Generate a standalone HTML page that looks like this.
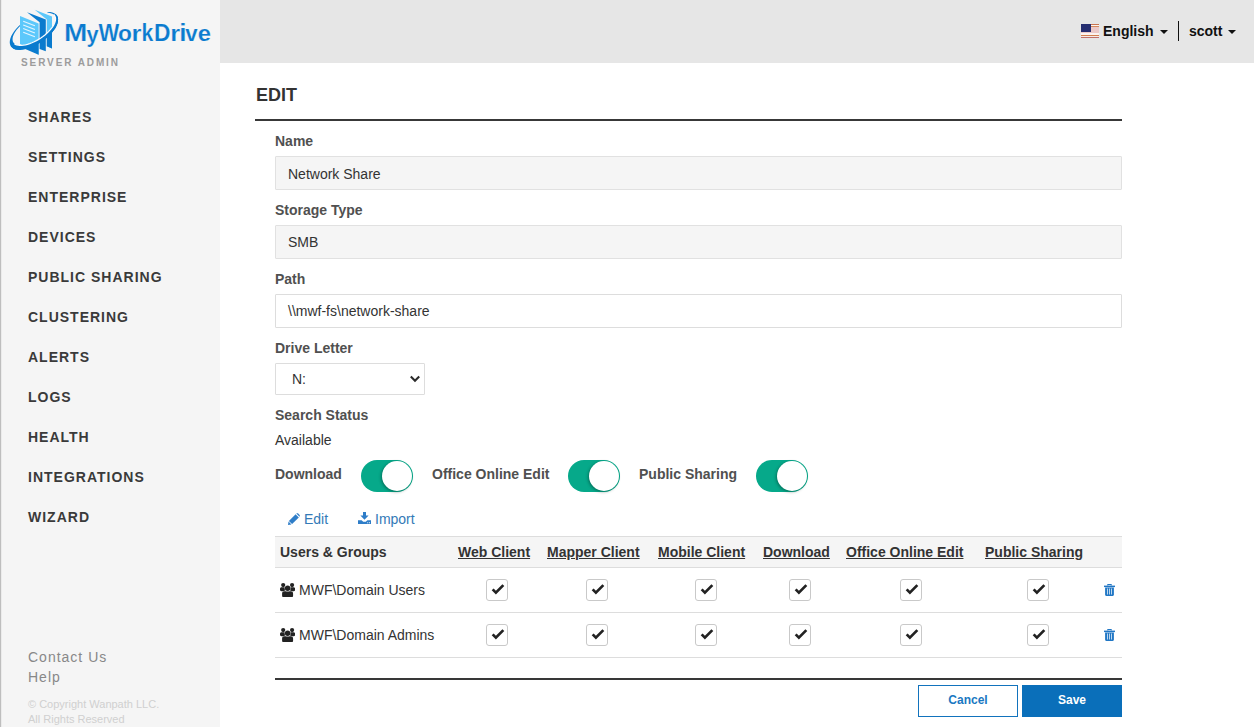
<!DOCTYPE html>
<html>
<head>
<meta charset="utf-8">
<title>MyWorkDrive Server Admin</title>
<style>
*{box-sizing:border-box;margin:0;padding:0}
html,body{width:1254px;height:727px;overflow:hidden;background:#fff}
body{font-family:"Liberation Sans",sans-serif;color:#333;position:relative}
.abs{position:absolute;white-space:nowrap}
#side{position:absolute;left:0;top:0;width:220px;height:727px;background:#f5f5f5}
#edge{position:absolute;left:0;top:0;width:2px;height:727px;background:linear-gradient(90deg,#bebebe 0,#bebebe 50%,#ebebeb 50%,#ebebeb 100%)}
#top{position:absolute;left:220px;top:0;width:1034px;height:63px;background:#e6e6e6}
.nav{position:absolute;left:28px;font-weight:bold;font-size:14px;letter-spacing:1px;color:#3a3a3a;line-height:16px;white-space:nowrap}
.lbl{position:absolute;font-weight:bold;font-size:14px;color:#505050;line-height:16px;white-space:nowrap}
.inp{position:absolute;left:275px;width:847px;height:34px;border:1px solid #ddd;border-radius:1px;font-size:14px;line-height:32px;padding:1px 0 0 12px;color:#333;white-space:nowrap}
.ro{background:#f5f5f5;border-color:#e1e1e1}
.th{position:absolute;top:544px;font-weight:bold;font-size:14px;color:#333;line-height:16px;white-space:nowrap}
.u{text-decoration:underline}
.cb{position:absolute;width:22px;height:22px;border:1px solid #c9c9c9;border-radius:3px;background:#fff}
.tg{position:absolute;width:52px;height:32px;border-radius:16px;background:#06a98a}
.tg i{position:absolute;right:1px;top:1px;width:30px;height:30px;border-radius:50%;background:#fff;box-shadow:-1px 1px 3px rgba(0,50,40,.45)}
</style>
</head>
<body>
<div id="side"></div>
<div id="edge"></div>
<div id="top"></div>


<!-- logo -->
<svg class="abs" style="left:0;top:0" width="220" height="75" viewBox="0 0 220 75">
 <defs><clipPath id="front"><path d="M53.65 14.55 L54.47 15.41 L55.07 16.41 L55.44 17.56 L55.57 18.82 L55.46 20.21 L55.13 21.69 L54.56 23.25 L53.76 24.87 L52.75 26.54 L51.54 28.24 L50.13 29.95 L48.55 31.65 L46.81 33.32 L44.93 34.95 L42.93 36.51 L40.83 37.99 L38.66 39.37 L36.43 40.64 L34.19 41.78 L31.94 42.79 L29.71 43.64 L27.53 44.34 L25.42 44.87 L23.41 45.22 L21.51 45.40 L19.75 45.40 L18.15 45.22 L16.72 44.87 L15.48 44.34 L14.45 43.65 L4.45 48.65 L0.00 75.00 L70.00 75.00 L63.65 11.55 Z"/></clipPath><clipPath id="back"><path d="M0 0 H20 V75 H0 Z M47.5 0 H70 V75 H47.5 Z"/></clipPath></defs>
 <g clip-path="url(#back)"><path fill="#0a7bce" fill-rule="evenodd" d="M56.94 15.52 L57.71 17.10 L58.08 18.92 L58.03 20.94 L57.57 23.14 L56.70 25.46 L55.45 27.88 L53.82 30.35 L51.86 32.84 L49.59 35.28 L47.05 37.66 L44.29 39.91 L41.34 42.02 L38.28 43.93 L35.13 45.62 L31.97 47.06 L28.84 48.22 L25.80 49.09 L22.89 49.64 L20.18 49.88 L17.70 49.79 L15.49 49.38 L13.61 48.65 L12.07 47.62 L10.90 46.30 L10.13 44.72 L9.76 42.90 L9.81 40.88 L10.27 38.68 L11.14 36.36 L12.39 33.94 L14.02 31.47 L15.98 28.98 L18.25 26.54 L20.79 24.16 L23.55 21.91 L26.50 19.80 L29.56 17.89 L32.71 16.20 L35.87 14.76 L39.00 13.60 L42.04 12.73 L44.95 12.18 L47.66 11.94 L50.14 12.03 L52.35 12.44 L54.23 13.17 L55.77 14.20 L56.94 15.52 Z M54.70 15.73 L55.31 17.06 L55.56 18.60 L55.45 20.33 L54.96 22.20 L54.12 24.19 L52.94 26.26 L51.43 28.38 L49.62 30.52 L47.55 32.63 L45.25 34.68 L42.75 36.63 L40.11 38.46 L37.36 40.12 L34.56 41.60 L31.75 42.86 L28.98 43.89 L26.29 44.67 L23.74 45.17 L21.36 45.41 L19.20 45.36 L17.29 45.04 L15.67 44.44 L14.37 43.58 L13.40 42.47 L12.79 41.14 L12.54 39.60 L12.65 37.87 L13.14 36.00 L13.98 34.01 L15.16 31.94 L16.67 29.82 L18.48 27.68 L20.55 25.57 L22.85 23.52 L25.35 21.57 L27.99 19.74 L30.74 18.08 L33.54 16.60 L36.35 15.34 L39.12 14.31 L41.81 13.53 L44.36 13.03 L46.74 12.79 L48.90 12.84 L50.81 13.16 L52.43 13.76 L53.73 14.62 L54.70 15.73 Z"/></g>
 <path fill="#5cc8fb" d="M34.7 9.7 L52 16.6 L52 48.5 L46.8 46.3 L46.8 19.4 Z"/>
 <path fill="#0a7bce" d="M27 12.2 L45.8 19.6 L45.8 51.2 L39.6 48.9 L39.6 22.3 Z"/>
 <path fill="#5cc8fb" d="M20 16 L38.6 23.5 L38.6 54.7 L20 44 Z"/>
 <g stroke="#e4f5ff" stroke-width="1.1" fill="none"><path d="M23.2 21.3 L34.9 25.8"/><path d="M23.2 24.9 L34.9 29.4"/><path d="M23.2 28.6 L34.9 33.1"/><path d="M23.2 32.3 L34.9 36.8"/></g>
 <g clip-path="url(#front)">
  <path fill="#0a7bce" d="M20 16 L38.6 23.5 L38.6 54.7 L25.8 49.2 L20 44 Z"/>
  <path fill="#0a7bce" d="M34.7 9.7 L52 16.6 L52 48.5 L46.8 46.3 L46.8 19.4 Z"/>
  <path fill="#0a7bce" fill-rule="evenodd" d="M56.94 15.52 L57.71 17.10 L58.08 18.92 L58.03 20.94 L57.57 23.14 L56.70 25.46 L55.45 27.88 L53.82 30.35 L51.86 32.84 L49.59 35.28 L47.05 37.66 L44.29 39.91 L41.34 42.02 L38.28 43.93 L35.13 45.62 L31.97 47.06 L28.84 48.22 L25.80 49.09 L22.89 49.64 L20.18 49.88 L17.70 49.79 L15.49 49.38 L13.61 48.65 L12.07 47.62 L10.90 46.30 L10.13 44.72 L9.76 42.90 L9.81 40.88 L10.27 38.68 L11.14 36.36 L12.39 33.94 L14.02 31.47 L15.98 28.98 L18.25 26.54 L20.79 24.16 L23.55 21.91 L26.50 19.80 L29.56 17.89 L32.71 16.20 L35.87 14.76 L39.00 13.60 L42.04 12.73 L44.95 12.18 L47.66 11.94 L50.14 12.03 L52.35 12.44 L54.23 13.17 L55.77 14.20 L56.94 15.52 Z M54.70 15.73 L55.31 17.06 L55.56 18.60 L55.45 20.33 L54.96 22.20 L54.12 24.19 L52.94 26.26 L51.43 28.38 L49.62 30.52 L47.55 32.63 L45.25 34.68 L42.75 36.63 L40.11 38.46 L37.36 40.12 L34.56 41.60 L31.75 42.86 L28.98 43.89 L26.29 44.67 L23.74 45.17 L21.36 45.41 L19.20 45.36 L17.29 45.04 L15.67 44.44 L14.37 43.58 L13.40 42.47 L12.79 41.14 L12.54 39.60 L12.65 37.87 L13.14 36.00 L13.98 34.01 L15.16 31.94 L16.67 29.82 L18.48 27.68 L20.55 25.57 L22.85 23.52 L25.35 21.57 L27.99 19.74 L30.74 18.08 L33.54 16.60 L36.35 15.34 L39.12 14.31 L41.81 13.53 L44.36 13.03 L46.74 12.79 L48.90 12.84 L50.81 13.16 L52.43 13.76 L53.73 14.62 L54.70 15.73 Z"/>
 </g>
 <path d="M53.65 14.55 L54.47 15.41 L55.07 16.41 L55.44 17.56 L55.57 18.82 L55.46 20.21 L55.13 21.69 L54.56 23.25 L53.76 24.87 L52.75 26.54 L51.54 28.24 L50.13 29.95 L48.55 31.65 L46.81 33.32 L44.93 34.95 L42.93 36.51 L40.83 37.99 L38.66 39.37 L36.43 40.64 L34.19 41.78 L31.94 42.79 L29.71 43.64 L27.53 44.34 L25.42 44.87 L23.41 45.22 L21.51 45.40 L19.75 45.40 L18.15 45.22 L16.72 44.87 L15.48 44.34 L14.45 43.65" fill="none" stroke="#fafcfe" stroke-width="1.25"/>
 <g font-family="Liberation Sans, sans-serif" font-weight="bold" font-size="23" fill="#0b7bcf" stroke="#f5f5f5" stroke-width="0.2"><text transform="translate(64.12 40.90) scale(1.219 1.055)">M</text><text transform="translate(86.43 41.62) scale(0.945 0.981)">y</text><text transform="translate(98.38 40.90) scale(0.956 1.055)">W</text><text transform="translate(117.91 40.98) scale(0.988 0.960)">o</text><text transform="translate(131.41 40.90) scale(1.115 0.920)">r</text><text transform="translate(141.42 40.90) scale(0.919 1.014)">k</text><text transform="translate(153.97 40.90) scale(0.993 1.055)">D</text><text transform="translate(170.23 40.90) scale(1.101 0.920)">r</text><text transform="translate(179.37 40.90) scale(1.141 1.014)">i</text><text transform="translate(185.31 40.90) scale(0.968 0.922)">v</text><text transform="translate(197.87 40.98) scale(1.035 0.960)">e</text></g>
</svg>
<div class="abs" style="left:21px;top:56.5px;font-size:10px;font-weight:bold;letter-spacing:1.9px;color:#9c9c9c;line-height:12px">SERVER ADMIN</div>

<!-- header right -->
<svg class="abs" style="left:1081px;top:24px" width="18" height="15" viewBox="0 0 18 15" shape-rendering="crispEdges">
 <rect x="0" y="0" width="18" height="14" fill="#ebc9c9"/>
 <rect x="0" y="0" width="18" height="1" fill="#c9744f"/>
 <rect x="0" y="1" width="18" height="1" fill="#fbf3f0"/>
 <rect x="0" y="2" width="18" height="1" fill="#d58a5e"/>
 <rect x="0" y="9" width="18" height="2" fill="#fbf3f0"/>
 <rect x="0" y="11" width="18" height="1" fill="#d2804f"/>
 <rect x="0" y="12" width="18" height="1" fill="#f6eae6"/>
 <rect x="0" y="13" width="18" height="1" fill="#c0706a"/>
 <rect x="0" y="0" width="10" height="8" fill="#252d70"/>
</svg>
<div class="abs" style="left:1103px;top:23px;font-size:14px;font-weight:bold;color:#111;line-height:16px">English</div>
<svg class="abs" style="left:1160px;top:30px" width="8" height="4" viewBox="0 0 8 4"><path d="M0 0 H8 L4 4 Z" fill="#111"/></svg>
<div class="abs" style="left:1178px;top:21px;width:1px;height:20px;background:#111"></div>
<div class="abs" style="left:1189px;top:23px;font-size:14px;font-weight:bold;color:#111;line-height:16px">scott</div>
<svg class="abs" style="left:1228px;top:30px" width="8" height="4" viewBox="0 0 8 4"><path d="M0 0 H8 L4 4 Z" fill="#111"/></svg>

<!-- nav -->
<div class="nav" style="top:109px">SHARES</div>
<div class="nav" style="top:149px">SETTINGS</div>
<div class="nav" style="top:189px">ENTERPRISE</div>
<div class="nav" style="top:229px">DEVICES</div>
<div class="nav" style="top:269px">PUBLIC SHARING</div>
<div class="nav" style="top:309px">CLUSTERING</div>
<div class="nav" style="top:349px">ALERTS</div>
<div class="nav" style="top:389px">LOGS</div>
<div class="nav" style="top:429px">HEALTH</div>
<div class="nav" style="top:469px">INTEGRATIONS</div>
<div class="nav" style="top:509px">WIZARD</div>

<div class="abs" style="left:28px;top:649px;font-size:14px;letter-spacing:1px;color:#888;line-height:16px">Contact Us</div>
<div class="abs" style="left:28px;top:669px;font-size:14px;letter-spacing:1px;color:#888;line-height:16px">Help</div>
<div class="abs" style="left:28px;top:697px;font-size:11px;color:#d0d0d0;line-height:15px">© Copyright Wanpath LLC.<br>All Rights Reserved</div>

<!-- main -->
<div class="abs" style="left:256px;top:85px;font-size:18px;font-weight:bold;color:#333;line-height:20px">EDIT</div>
<div class="abs" style="left:255px;top:119px;width:867px;height:2px;background:#383838"></div>

<div class="lbl" style="left:275px;top:133px">Name</div>
<div class="inp ro" style="top:156px">Network Share</div>
<div class="lbl" style="left:275px;top:202px">Storage Type</div>
<div class="inp ro" style="top:225px;padding-top:0">SMB</div>
<div class="lbl" style="left:275px;top:271px">Path</div>
<div class="inp" style="top:294px;padding-top:0">\\mwf-fs\network-share</div>
<div class="lbl" style="left:275px;top:340px">Drive Letter</div>
<div class="inp" style="top:363px;width:150px;height:32px;line-height:30px;padding:0 0 0 16px">N:</div>
<svg class="abs" style="left:409px;top:374px" width="12" height="10" viewBox="0 0 12 10"><path d="M1.8 2.6 L6 6.8 L10.2 2.6" fill="none" stroke="#2b2b2b" stroke-width="2.1"/></svg>
<div class="lbl" style="left:275px;top:407px">Search Status</div>
<div class="abs" style="left:275px;top:432px;font-size:14px;color:#333;line-height:16px">Available</div>

<div class="lbl" style="left:275px;top:466px">Download</div>
<div class="tg" style="left:361px;top:460px"><i></i></div>
<div class="lbl" style="left:432px;top:466px">Office Online Edit</div>
<div class="tg" style="left:568px;top:460px"><i></i></div>
<div class="lbl" style="left:639px;top:466px">Public Sharing</div>
<div class="tg" style="left:756px;top:460px"><i></i></div>

<svg class="abs" style="left:288px;top:513px" width="12" height="12" viewBox="0 0 12 12"><g fill="#2e7dc8">
<path d="M8.3 0.5 L11.5 3.7 C12 3.1 12 2.4 11.4 1.8 L10.2 0.6 C9.6 0 8.9 0 8.3 0.5 Z"/>
<path d="M7.6 1.2 L10.8 4.4 L4.1 11.1 L0.9 7.9 Z"/>
<path d="M0.5 8.6 L3.4 11.5 L0 12 Z"/>
</g></svg>
<svg class="abs" style="left:358px;top:512px" width="13" height="12" viewBox="0 0 13 12"><g fill="#2e7dc8">
<path d="M5 0 H8 V3.6 H10.6 L6.5 7.7 L2.4 3.6 H5 Z"/>
<path fill-rule="evenodd" d="M0 8.3 H3.6 L5.2 9.8 H7.8 L9.4 8.3 H13 V12 H0 Z M9.3 10.3 H10.2 V11.2 H9.3 Z M11 10.3 H11.9 V11.2 H11 Z"/>
</g></svg>
<div class="abs" style="left:304px;top:511px;font-size:14px;color:#337ab7;line-height:16px">Edit</div>
<div class="abs" style="left:375px;top:511px;font-size:14px;color:#337ab7;line-height:16px">Import</div>

<!-- table -->
<div class="abs" style="left:275px;top:536px;width:847px;height:32px;background:#f5f5f5;border-top:1px solid #ddd;border-bottom:1px solid #ddd"></div>
<div class="abs" style="left:275px;top:612px;width:847px;height:1px;background:#ddd"></div>
<div class="abs" style="left:275px;top:657px;width:847px;height:1px;background:#ddd"></div>
<div class="th" style="left:280px">Users &amp; Groups</div>
<div class="th u" style="left:458px">Web Client</div>
<div class="th u" style="left:547px">Mapper Client</div>
<div class="th u" style="left:658px">Mobile Client</div>
<div class="th u" style="left:763px">Download</div>
<div class="th u" style="left:846px">Office Online Edit</div>
<div class="th u" style="left:985px">Public Sharing</div>

<svg class="abs" style="left:280px;top:582.5px" width="15.2" height="14.4" viewBox="0 0 15.2 14.4"><g fill="#222">
<circle cx="3.2" cy="2.1" r="2.1"/><circle cx="12.1" cy="2.1" r="2.1"/><circle cx="7.65" cy="5.2" r="2.75"/>
<path d="M0 6.6 V5.9 C0 4.9 0.7 4.3 1.6 4.3 H4.7 C4.5 5.6 4.7 6.6 5.4 7.6 C4.6 7.7 4 7.9 3.6 8.2 H1.6 C0.6 8.2 0 7.6 0 6.6 Z"/>
<path d="M15.2 6.6 V5.9 C15.2 4.9 14.5 4.3 13.6 4.3 H10.6 C10.8 5.6 10.6 6.6 9.9 7.6 C10.7 7.7 11.3 7.9 11.7 8.2 H13.6 C14.6 8.2 15.2 7.6 15.2 6.6 Z"/>
<path d="M2.1 12.7 V10.4 C2.1 9 3.1 8.2 4.4 8.2 H5.6 C6.2 8.45 6.9 8.55 7.65 8.55 C8.4 8.55 9.1 8.45 9.7 8.2 H10.8 C12.1 8.2 13.1 9 13.1 10.4 V12.7 C13.1 13.7 12.4 14.4 11.4 14.4 H3.8 C2.8 14.4 2.1 13.7 2.1 12.7 Z"/>
</g></svg>
<div class="abs" style="left:299px;top:582px;font-size:14px;color:#333;line-height:16px">MWF\Domain Users</div>
<svg class="abs" style="left:280px;top:627.5px" width="15.2" height="14.4" viewBox="0 0 15.2 14.4"><g fill="#222">
<circle cx="3.2" cy="2.1" r="2.1"/><circle cx="12.1" cy="2.1" r="2.1"/><circle cx="7.65" cy="5.2" r="2.75"/>
<path d="M0 6.6 V5.9 C0 4.9 0.7 4.3 1.6 4.3 H4.7 C4.5 5.6 4.7 6.6 5.4 7.6 C4.6 7.7 4 7.9 3.6 8.2 H1.6 C0.6 8.2 0 7.6 0 6.6 Z"/>
<path d="M15.2 6.6 V5.9 C15.2 4.9 14.5 4.3 13.6 4.3 H10.6 C10.8 5.6 10.6 6.6 9.9 7.6 C10.7 7.7 11.3 7.9 11.7 8.2 H13.6 C14.6 8.2 15.2 7.6 15.2 6.6 Z"/>
<path d="M2.1 12.7 V10.4 C2.1 9 3.1 8.2 4.4 8.2 H5.6 C6.2 8.45 6.9 8.55 7.65 8.55 C8.4 8.55 9.1 8.45 9.7 8.2 H10.8 C12.1 8.2 13.1 9 13.1 10.4 V12.7 C13.1 13.7 12.4 14.4 11.4 14.4 H3.8 C2.8 14.4 2.1 13.7 2.1 12.7 Z"/>
</g></svg>
<div class="abs" style="left:299px;top:627px;font-size:14px;color:#333;line-height:16px">MWF\Domain Admins</div>

<div class="cb" style="left:486px;top:579px"><svg width="20" height="20" viewBox="0 0 20 20"><path d="M4.7 10.3 L6.6 8.4 L8.9 10.7 L15.4 4.2 L17.3 6.1 L8.9 14.5 Z" fill="#222"/></svg></div>
<div class="cb" style="left:586px;top:579px"><svg width="20" height="20" viewBox="0 0 20 20"><path d="M4.7 10.3 L6.6 8.4 L8.9 10.7 L15.4 4.2 L17.3 6.1 L8.9 14.5 Z" fill="#222"/></svg></div>
<div class="cb" style="left:695px;top:579px"><svg width="20" height="20" viewBox="0 0 20 20"><path d="M4.7 10.3 L6.6 8.4 L8.9 10.7 L15.4 4.2 L17.3 6.1 L8.9 14.5 Z" fill="#222"/></svg></div>
<div class="cb" style="left:789px;top:579px"><svg width="20" height="20" viewBox="0 0 20 20"><path d="M4.7 10.3 L6.6 8.4 L8.9 10.7 L15.4 4.2 L17.3 6.1 L8.9 14.5 Z" fill="#222"/></svg></div>
<div class="cb" style="left:900px;top:579px"><svg width="20" height="20" viewBox="0 0 20 20"><path d="M4.7 10.3 L6.6 8.4 L8.9 10.7 L15.4 4.2 L17.3 6.1 L8.9 14.5 Z" fill="#222"/></svg></div>
<div class="cb" style="left:1027px;top:579px"><svg width="20" height="20" viewBox="0 0 20 20"><path d="M4.7 10.3 L6.6 8.4 L8.9 10.7 L15.4 4.2 L17.3 6.1 L8.9 14.5 Z" fill="#222"/></svg></div>
<div class="cb" style="left:486px;top:624px"><svg width="20" height="20" viewBox="0 0 20 20"><path d="M4.7 10.3 L6.6 8.4 L8.9 10.7 L15.4 4.2 L17.3 6.1 L8.9 14.5 Z" fill="#222"/></svg></div>
<div class="cb" style="left:586px;top:624px"><svg width="20" height="20" viewBox="0 0 20 20"><path d="M4.7 10.3 L6.6 8.4 L8.9 10.7 L15.4 4.2 L17.3 6.1 L8.9 14.5 Z" fill="#222"/></svg></div>
<div class="cb" style="left:695px;top:624px"><svg width="20" height="20" viewBox="0 0 20 20"><path d="M4.7 10.3 L6.6 8.4 L8.9 10.7 L15.4 4.2 L17.3 6.1 L8.9 14.5 Z" fill="#222"/></svg></div>
<div class="cb" style="left:789px;top:624px"><svg width="20" height="20" viewBox="0 0 20 20"><path d="M4.7 10.3 L6.6 8.4 L8.9 10.7 L15.4 4.2 L17.3 6.1 L8.9 14.5 Z" fill="#222"/></svg></div>
<div class="cb" style="left:900px;top:624px"><svg width="20" height="20" viewBox="0 0 20 20"><path d="M4.7 10.3 L6.6 8.4 L8.9 10.7 L15.4 4.2 L17.3 6.1 L8.9 14.5 Z" fill="#222"/></svg></div>
<div class="cb" style="left:1027px;top:624px"><svg width="20" height="20" viewBox="0 0 20 20"><path d="M4.7 10.3 L6.6 8.4 L8.9 10.7 L15.4 4.2 L17.3 6.1 L8.9 14.5 Z" fill="#222"/></svg></div>

<svg class="abs" style="left:1104px;top:584px" width="11" height="12" viewBox="0 0 11 12"><g fill="#2177c5">
<path d="M3.3 0 H7.7 V1.6 H6.7 V0.9 H4.3 V1.6 H3.3 Z"/>
<rect x="0" y="1.6" width="11" height="1.5"/>
<path fill-rule="evenodd" d="M1.1 3.4 H9.9 V10.8 C9.9 11.5 9.4 12 8.7 12 H2.3 C1.6 12 1.1 11.5 1.1 10.8 Z M3.1 4.6 H3.8 V10.4 H3.1 Z M5.15 4.6 H5.85 V10.4 H5.15 Z M7.2 4.6 H7.9 V10.4 H7.2 Z"/>
</g></svg>
<svg class="abs" style="left:1104px;top:629px" width="11" height="12" viewBox="0 0 11 12"><g fill="#2177c5">
<path d="M3.3 0 H7.7 V1.6 H6.7 V0.9 H4.3 V1.6 H3.3 Z"/>
<rect x="0" y="1.6" width="11" height="1.5"/>
<path fill-rule="evenodd" d="M1.1 3.4 H9.9 V10.8 C9.9 11.5 9.4 12 8.7 12 H2.3 C1.6 12 1.1 11.5 1.1 10.8 Z M3.1 4.6 H3.8 V10.4 H3.1 Z M5.15 4.6 H5.85 V10.4 H5.15 Z M7.2 4.6 H7.9 V10.4 H7.2 Z"/>
</g></svg>
<!-- footer -->
<div class="abs" style="left:275px;top:678px;width:847px;height:2px;background:#383838"></div>
<div class="abs" style="left:918px;top:685px;width:100px;height:32px;border:1px solid #1273bd;background:#fff;color:#1a78c2;font-weight:bold;font-size:12px;line-height:29px;text-align:center">Cancel</div>
<div class="abs" style="left:1022px;top:685px;width:100px;height:32px;background:#0a6fba;color:#fff;font-weight:bold;font-size:12px;line-height:31px;text-align:center">Save</div>
</body>
</html>
